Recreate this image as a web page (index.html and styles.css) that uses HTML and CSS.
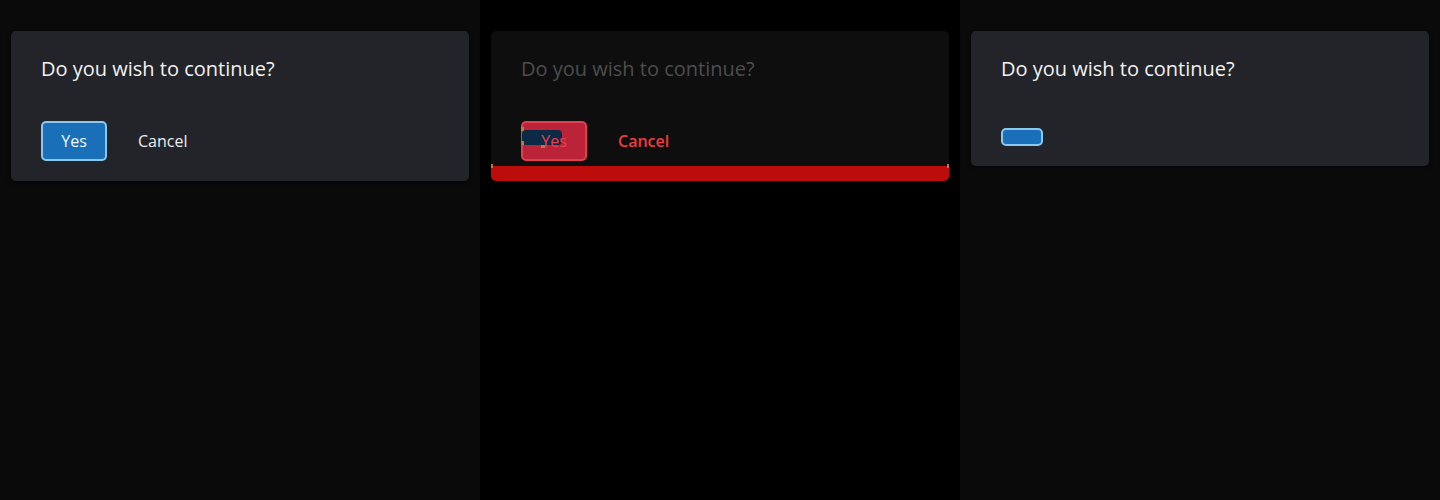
FILE: index.html
```html
<!DOCTYPE html>
<html>
<head>
<meta charset="utf-8">
<link rel="stylesheet" href="styles.css">
</head>
<body>
<div class="cols">
  <section class="col col-dark">
    <div class="card">
      <p class="title">Do you wish to continue?</p>
      <div class="actions">
        <button class="btn btn-primary">Yes</button>
        <button class="btn btn-text">Cancel</button>
      </div>
    </div>
  </section>
  <section class="col col-black">
    <div class="card card-danger">
      <p class="title title-muted">Do you wish to continue?</p>
      <div class="actions">
        <button class="btn btn-danger">
          <span class="blob"></span>
          <span class="speck speck-a"></span>
          <span class="speck speck-b"></span>
          <span class="speck speck-c"></span>
          <span class="btn-label">Yes</span>
        </button>
        <button class="btn btn-text btn-text-danger">Cancel</button>
      </div>
      <div class="danger-strip"><span class="strip-speck"></span><span class="strip-speck strip-speck-r"></span></div>
    </div>
  </section>
  <section class="col col-dark">
    <div class="card card-compact">
      <p class="title">Do you wish to continue?</p>
      <div class="actions actions-compact">
        <button class="btn btn-primary btn-empty"></button>
      </div>
    </div>
  </section>
</div>
</body>
</html>
```
FILE: styles.css
```css
* { box-sizing: border-box; }
html, body { margin: 0; padding: 0; }
body {
  width: 1440px;
  height: 500px;
  overflow: hidden;
  font-family: "Open Sans", "Noto Sans", sans-serif;
  background: #000;
}
.cols {
  display: grid;
  grid-template-columns: 480px 480px 480px;
  height: 500px;
}
.col {
  padding: 31px 11px 0 11px;
}
.col-dark { background: #0a0a0a; }
.col-black { background: #000; }

.card {
  position: relative;
  background: #232429;
  border-radius: 5px;
  padding: 24px 30px 20px 30px;
  box-shadow: 0 1px 4px rgba(0,0,0,0.6);
  overflow: hidden;
}
.title {
  margin: 0;
  font-size: 20px;
  line-height: 28px;
  color: #f2f2f2;
  font-weight: 400;
}
.title-muted { color: #4d4d4d; }
.actions {
  display: flex;
  align-items: center;
  gap: 31px;
  margin-top: 38px;
}
.actions-compact { margin-top: 45px; }

.btn {
  position: relative;
  font-family: inherit;
  font-size: 16px;
  height: 40px;
  border-radius: 5px;
  padding: 0;
  cursor: pointer;
}
.btn-primary {
  width: 66px;
  background: #1a6fb9;
  border: 2px solid #8ac8f0;
  color: #f4f8fc;
}
.btn-empty {
  width: 42px;
  height: 18px;
}
.btn-text {
  background: none;
  border: none;
  color: #ececec;
  padding: 0;
}
.btn-text-danger { color: #f03c3c; font-weight: 600; }

.card-danger {
  background: #0e0e0e;
}
.btn-danger {
  width: 66px;
  background: #bb2338;
  border: 2px solid #e2404e;
  color: #f0404a;
  overflow: visible;
}
.btn-label { position: relative; }
.blob {
  position: absolute;
  left: -1px;
  top: 7px;
  width: 40px;
  height: 15px;
  background: #0c2a45;
  border-radius: 4px;
}
.speck {
  position: absolute;
  background: #b67a44;
  width: 3px;
  height: 4px;
}
.speck-a { left: -2px; top: 4px; }
.speck-b { left: -2px; top: 18px; }
.speck-c { left: 18px; top: 22px; width: 4px; height: 3px; }
.danger-strip {
  position: absolute;
  left: 0;
  right: 0;
  bottom: 0;
  height: 15px;
  background: #bc0c0c;
}
.strip-speck {
  position: absolute;
  left: 0;
  top: -2px;
  width: 2px;
  height: 4px;
  background: #b67a44;
}
.strip-speck-r { left: auto; right: 0; }
```
